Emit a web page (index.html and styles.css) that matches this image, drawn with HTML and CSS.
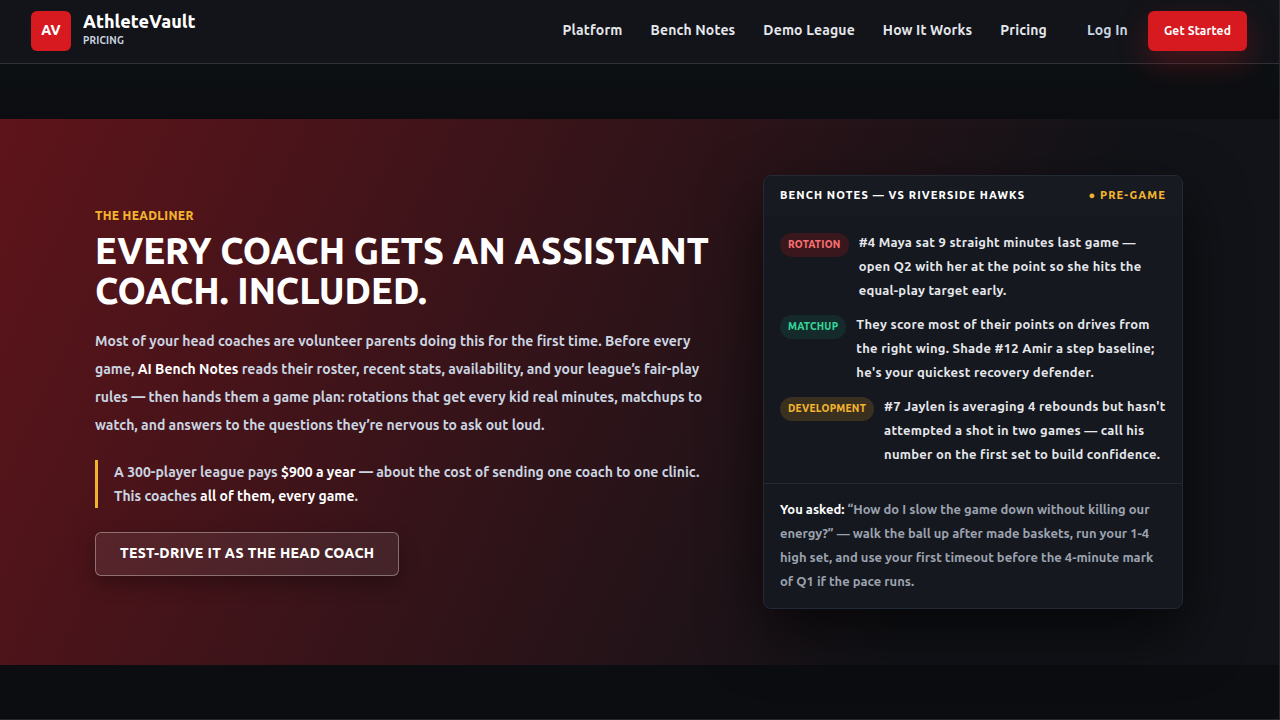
FILE: index.html
```
<!DOCTYPE html>
<html lang="en">
<head>
<meta charset="utf-8">
<meta name="viewport" content="width=device-width, initial-scale=1">
<title>AthleteVault – Pricing</title>
<link rel="stylesheet" href="styles.css">
</head>
<body>
<header class="topbar">
  <div class="topbar-inner">
    <a class="brand" href="#">
      <span class="brand-mark">AV</span>
      <span class="brand-text">
        <span class="brand-name">AthleteVault</span>
        <span class="brand-page">PRICING</span>
      </span>
    </a>
    <nav class="nav">
      <a href="#">Platform</a>
      <a href="#">Bench Notes</a>
      <a href="#">Demo League</a>
      <a href="#">How It Works</a>
      <a href="#">Pricing</a>
    </nav>
    <div class="account">
      <a class="login" href="#">Log In</a>
      <a class="cta" href="#">Get Started</a>
    </div>
  </div>
</header>
<main class="page">
  <section class="headliner">
    <div class="headliner-inner">
      <div class="pitch">
        <p class="eyebrow">THE HEADLINER</p>
        <h1 class="title">EVERY COACH GETS AN ASSISTANT COACH. INCLUDED.</h1>
        <p class="lead">Most of your head coaches are volunteer parents doing this for the first time. Before every game, <strong>AI Bench Notes</strong> reads their roster, recent stats, availability, and your league’s fair-play rules — then hands them a game plan: rotations that get every kid real minutes, matchups to watch, and answers to the questions they’re nervous to ask out loud.</p>
        <p class="callout">A 300-player league pays <strong>$900 a year</strong> — about the cost of sending one coach to one clinic. This coaches <strong>all of them, every game</strong>.</p>
        <a class="demo-button" href="#">TEST-DRIVE IT AS THE HEAD COACH</a>
      </div>
      <article class="notes">
        <header class="notes-head">
          <h2 class="notes-title">BENCH NOTES — VS RIVERSIDE HAWKS</h2>
          <span class="notes-status">● PRE-GAME</span>
        </header>
        <ul class="notes-list">
          <li class="note"><span class="tag tag-rotation">ROTATION</span><p>#4 Maya sat 9 straight minutes last game — open Q2 with her at the point so she hits the equal-play target early.</p></li>
          <li class="note"><span class="tag tag-matchup">MATCHUP</span><p>They score most of their points on drives from the right wing. Shade #12 Amir a step baseline; he's your quickest recovery defender.</p></li>
          <li class="note"><span class="tag tag-development">DEVELOPMENT</span><p>#7 Jaylen is averaging 4 rebounds but hasn't attempted a shot in two games — call his number on the first set to build confidence.</p></li>
        </ul>
        <p class="answer"><strong>You asked:</strong> “How do I slow the game down without killing our energy?” — walk the ball up after made baskets, run your 1-4 high set, and use your first timeout before the 4-minute mark of Q1 if the pace runs.</p>
      </article>
    </div>
  </section>
</main>
</body>
</html>
```
FILE: styles.css
```
* { box-sizing: border-box; }
body {
  margin: 0;
  min-height: 100vh;
  border-right: 1px solid #292929;
  border-bottom: 1px solid #292929;
  background: #0c0d11;
  color: #fff;
  font-family: Ubuntu, "Noto Sans", sans-serif;
  font-size: 14px;
  font-weight: 600;
}
h1, h2, p, ul { margin: 0; padding: 0; }
a { color: inherit; text-decoration: none; }
strong { color: #fff; font-weight: 600; }

.topbar {
  padding: 11px 25px 12px 24px;
  background: #121419;
  border-bottom: 1px solid #2f3136;
}
.topbar-inner {
  display: flex;
  align-items: center;
  max-width: 1216px;
  margin: 0 auto;
}
.brand { display: flex; align-items: center; gap: 12px; margin-right: auto; }
.brand-mark {
  display: grid;
  place-items: center;
  width: 40px;
  height: 40px;
  padding-bottom: 2px;
  border-radius: 6px;
  background: #d71920;
  font-weight: 800;
}
.brand-text { display: flex; flex-direction: column; gap: 3px; padding-bottom: 3px; }
.brand-name { font-size: 18px; line-height: 20px; font-weight: 800; }
.brand-page { font-size: 10px; line-height: 14px; letter-spacing: 0.02em; color: #cbd5e1; }
.nav { display: flex; gap: 28px; padding-bottom: 2px; font-weight: 700; letter-spacing: 0.01em; color: #e5e7eb; }
.account { display: flex; align-items: center; gap: 20px; margin-left: 40px; font-weight: 700; letter-spacing: 0.01em; }
.login { padding-bottom: 2px; color: #cbd5e1; }
.cta {
  padding: 0 16px;
  border-radius: 6px;
  background: #d71920;
  box-shadow: 0 12px 30px rgba(215, 25, 32, 0.28);
  font-size: 12px;
  line-height: 40px;
}

.page {
  padding: 55px 0 54px;
  background: linear-gradient(#0c1013, #0c0d11 55px);
}
.headliner {
  padding: 56px 49px 56px 48px;
  background: linear-gradient(115deg, #5e141a 0%, #111318 75%);
}
.headliner-inner {
  display: grid;
  grid-template-columns: minmax(0, 1fr) 420px;
  align-items: center;
  gap: 40px;
  max-width: 1088px;
  margin: 0 auto;
}
.pitch { display: flex; flex-direction: column; align-items: flex-start; }
.eyebrow { color: #f2b32f; font-size: 12px; line-height: 16px; font-weight: 800; letter-spacing: 0.025em; }
.title { margin-top: 7px; font-size: 36px; line-height: 40px; font-weight: 800; }
.lead { margin-top: 16px; color: #cbd5e1; line-height: 28px; }
.callout {
  margin-top: 21px;
  padding-left: 16px;
  border-left: 3px solid #f2b32f;
  color: #cbd5e1;
  line-height: 24px;
}
.demo-button {
  margin-top: 24px;
  padding: 0 24px 2px;
  border: 1px solid rgba(255, 255, 255, 0.35);
  border-radius: 6px;
  background: rgba(255, 255, 255, 0.07);
  box-shadow: 0 8px 20px rgba(0, 0, 0, 0.3);
  line-height: 40px;
  font-weight: 800;
  letter-spacing: 0.025em;
}

.notes {
  overflow: hidden;
  border: 1px solid #242a33;
  border-radius: 8px;
  background: #15181f;
  box-shadow: 0 24px 60px rgba(0, 0, 0, 0.65);
  font-size: 13px;
  line-height: 24px;
}
.notes-head {
  display: flex;
  justify-content: space-between;
  padding: 7px 16px 9px;
  background: #171a20;
  font-size: 11px;
  font-weight: 800;
  letter-spacing: 0.1em;
}
.notes-title { font-size: 11px; font-weight: 800; }
.notes-status { color: #f2b32f; }
.notes-list { display: grid; gap: 10px; padding: 14px 16px 17px; list-style: none; }
.note {
  display: flex;
  align-items: flex-start;
  gap: 10px;
  color: #e5e7eb;
  letter-spacing: 0.02em;
}
.tag {
  flex: none;
  margin-top: 3px;
  padding: 0 8px;
  border-radius: 12px;
  font-size: 10px;
  line-height: 24px;
  font-weight: 800;
  letter-spacing: 0.025em;
}
.tag-rotation { background: #3a171d; color: #f87171; }
.tag-matchup { background: #152a2a; color: #34d399; }
.tag-development { background: #3a3020; color: #f2b32f; }
.answer { padding: 13px 16px 15px; border-top: 1px solid #242a33; color: #9ca3af; }
```
